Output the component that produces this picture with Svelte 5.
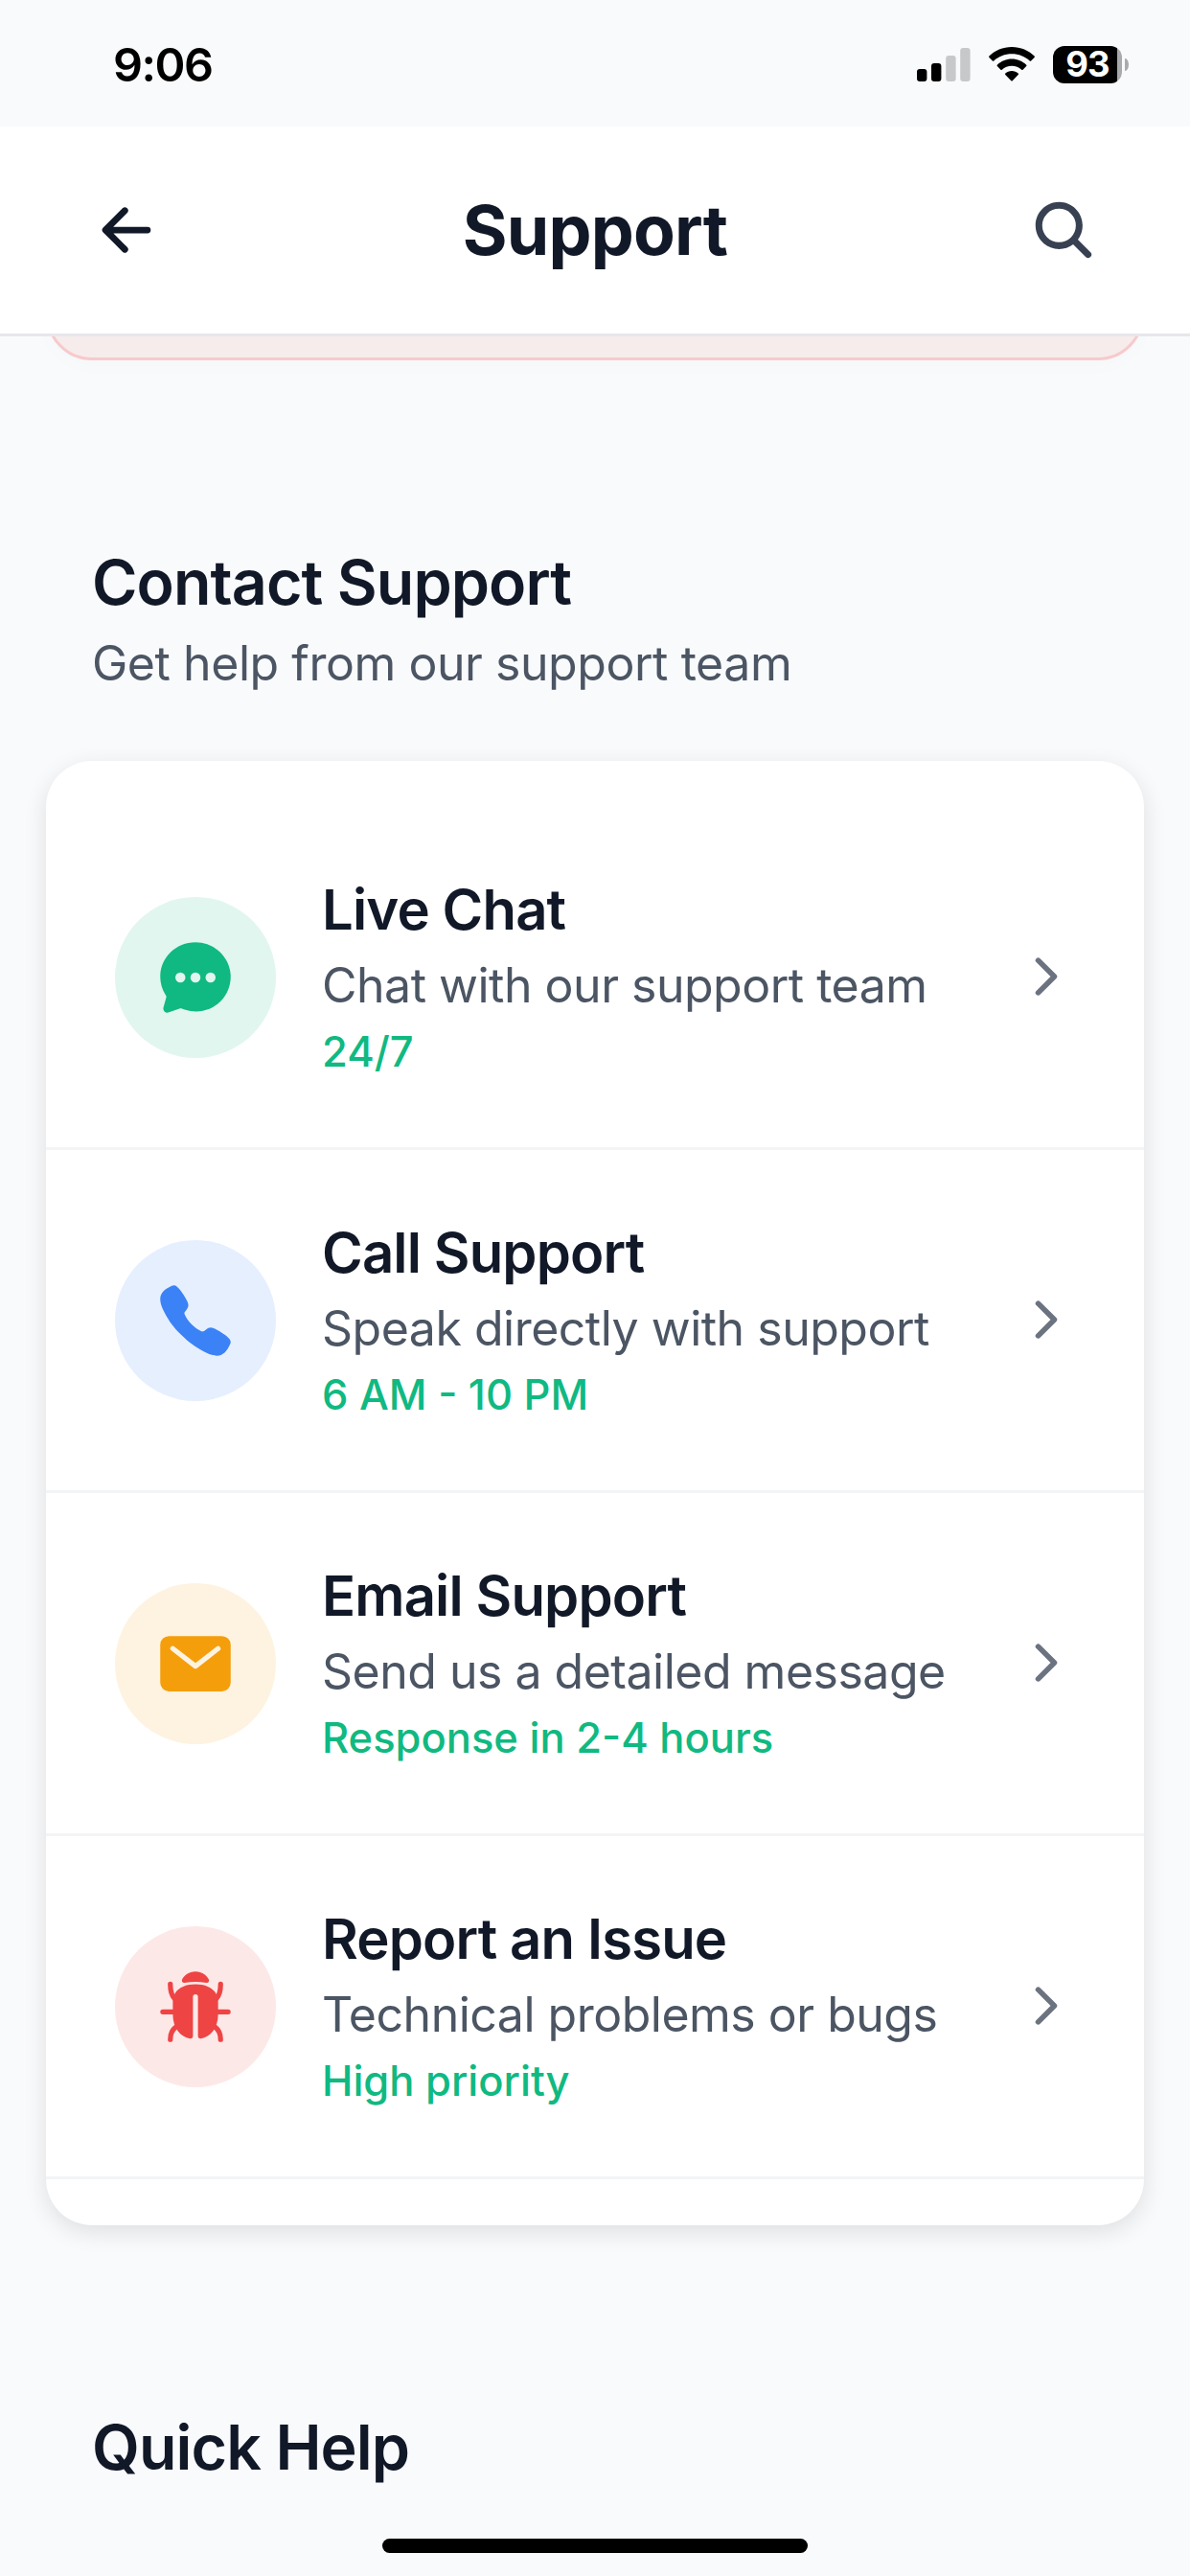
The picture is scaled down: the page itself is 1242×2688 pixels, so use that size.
<script>
  const contacts = [
    { kind: 'chat', title: 'Live Chat', text: 'Chat with our support team', note: '24/7' },
    { kind: 'call', title: 'Call Support', text: 'Speak directly with support', note: '6 AM - 10 PM' },
    { kind: 'mail', title: 'Email Support', text: 'Send us a detailed message', note: 'Response in 2-4 hours' },
    { kind: 'bug', title: 'Report an Issue', text: 'Technical problems or bugs', note: 'High priority' }
  ];
</script>

<div class="screen">
  <div class="status">
    <span class="time">9:06</span>
    <div class="indicators">
      <svg class="signal" viewBox="0 0 56 36">
        <rect x="0" y="22" width="10.4" height="13" rx="3" />
        <rect x="15" y="16" width="10.4" height="19" rx="3" />
        <rect class="dim" x="30.2" y="8" width="10.4" height="27" rx="3" />
        <rect class="dim" x="45.2" y="0" width="10.4" height="35" rx="3" />
      </svg>
      <svg class="wifi" viewBox="0 0 48 36">
        <path d="M24 0C33.300 0 41.700 3.600 47.600 9.500Q48.200 10.200 47.600 10.900L44.100 14.400Q43.400 15 42.700 14.400C37.900 9.900 31.300 7.200 24 7.200S10.100 9.900 5.300 14.400Q4.600 15 3.900 14.400L.4 10.900Q-.2 10.200 .4 9.500C6.300 3.600 14.700 0 24 0Z" />
        <path d="M24 12.500C29.900 12.500 35.300 14.900 39.200 18.700Q39.900 19.400 39.200 20.100L35.600 23.700Q34.900 24.300 34.200 23.700C31.500 21.300 27.900 19.800 24 19.800S16.500 21.300 13.800 23.700Q13.100 24.300 12.400 23.700L8.800 20.100Q8.100 19.400 8.800 18.700C12.700 14.900 18.100 12.500 24 12.500Z" />
        <path d="M24 25C26.600 25 28.900 26 30.700 27.600Q31.400 28.300 30.700 29L24.700 35.200Q24 35.900 23.300 35.200L17.300 29Q16.600 28.300 17.300 27.600C19.100 26 21.400 25 24 25Z" />
      </svg>
      <div class="battery">
        <span class="level">93</span>
        <span class="nub"></span>
      </div>
    </div>
  </div>

  <header>
    <svg class="back" viewBox="0 0 512 512"><path d="M244 400L100 256l144-144M120 256h292" /></svg>
    <h1>Support</h1>
    <svg class="search" viewBox="0 0 512 512"><path d="M456.690 421.390L362.600 327.300a173.810 173.810 0 0034.840-104.580C397.440 126.380 319.060 48 222.720 48S48 126.380 48 222.720s78.380 174.720 174.720 174.720A173.810 173.810 0 00327.300 362.600l94.090 94.090a25 25 0 0035.300-35.300zM97.920 222.720a124.800 124.800 0 11124.800 124.800 124.950 124.950 0 01-124.800-124.800z" /></svg>
  </header>

  <main>
    <div class="alert"></div>

    <section class="intro">
      <h2>Contact Support</h2>
      <p class="sub">Get help from our support team</p>
    </section>

    <div class="card">
      {#each contacts as c (c.kind)}
        <div class="row">
          <div class="badge {c.kind}">
            <svg viewBox="0 0 512 512">
              {#if c.kind === 'chat'}
                <path d="M398 81.840A227.400 227.400 0 00255.820 32C194.900 32 138 55.470 95.460 98.090 54.350 139.330 31.820 193.780 32 251.370a215.660 215.660 0 0035.650 118.760l.19.27c.28.41.57.82.86 1.220s.65.92.73 1.050l.22.4c1.130 2 2 4.440 1.230 6.900l-18.420 66.660a29.130 29.130 0 00-1.200 7.630A25.690 25.690 0 0076.830 480a29.440 29.440 0 0010.450-2.290l67.490-24.360.85-.33a14.750 14.750 0 015.840-1.150 15.120 15.120 0 015.370 1c1.620.63 16.330 6.260 31.850 10.600 12.900 3.600 39.740 9 60.770 9 59.650 0 115.350-23.100 156.830-65.060C457.360 365.770 480 310.420 480 251.490a213.500 213.500 0 00-4.780-45c-10.340-48.620-37.760-92.900-77.220-124.650zM160 288a32 32 0 1132-32 32 32 0 01-32 32zm96 0a32 32 0 1132-32 32 32 0 01-32 32zm96 0a32 32 0 1132-32 32 32 0 01-32 32z" />
              {:else if c.kind === 'call'}
                <path d="M391 480c-19.520 0-46.940-7.060-88-30-49.930-28-88.550-53.850-138.210-103.380C116.910 298.770 93.610 267.790 61 208.450c-36.840-67-30.560-102.120-23.540-117.130C45.820 73.380 58.160 62.650 74.110 52a176.300 176.300 0 0128.640-15.200c1-.43 1.930-.84 2.760-1.210 4.950-2.230 12.450-5.600 21.950-2 6.340 2.380 12 7.250 20.860 16 18.170 17.920 43 57.830 52.160 77.430 6.150 13.210 10.220 21.930 10.230 31.710 0 11.450-5.760 20.280-12.750 29.810-1.310 1.790-2.610 3.500-3.870 5.160-7.610 10-9.280 12.890-8.180 18.050 2.230 10.370 18.860 41.240 46.190 68.510s57.310 42.850 67.720 45.070c5.380 1.150 8.330-.59 18.650-8.470 1.480-1.130 3-2.300 4.590-3.470 10.660-7.930 19.080-13.540 30.260-13.540h.06c9.730 0 18.060 4.220 31.860 11.180 18 9.080 59.110 33.590 77.140 51.780 8.770 8.840 13.660 14.480 16.050 20.810 3.600 9.530.21 17-2 22-.37.83-.78 1.740-1.210 2.750a176.490 176.490 0 01-15.290 28.580c-10.630 15.900-21.400 28.210-39.380 36.580A67.420 67.420 0 01391 480z" />
              {:else if c.kind === 'mail'}
                <path d="M424 80H88a56.060 56.060 0 00-56 56v240a56.060 56.060 0 0056 56h336a56.060 56.060 0 0056-56V136a56.060 56.060 0 00-56-56zm-14.180 92.630l-144 112a16 16 0 01-19.640 0l-144-112a16 16 0 1119.640-25.260L256 251.730l134.180-104.360a16 16 0 0119.640 25.260z" />
              {:else}
                <path d="M256 32C296 32 329 56 341 83C346 96 337 106 325 104C280 96 232 96 187 104C175 106 166 96 171 83C183 56 216 32 256 32Z" />
                <path d="M256 112C314 112 364 132 386 170Q400 195 400 224V304C400 388 352 447 290 459Q272 461 272 444V192A16 16 0 00240 192V444Q240 461 222 459C160 447 112 388 112 304V224Q112 195 126 170C148 132 198 112 256 112Z" />
                <path class="legs" d="M48 288H120M392 288H464M96 112C96 160 104 184 124 206M416 112C416 160 408 184 388 206M96 464C96 424 106 404 130 386M416 464C416 424 406 404 382 386" />
              {/if}
            </svg>
          </div>
          <div class="copy">
            <h3>{c.title}</h3>
            <p class="text">{c.text}</p>
            <p class="note">{c.note}</p>
          </div>
          <svg class="chevron" viewBox="0 0 512 512"><path d="M184 112l144 144-144 144" /></svg>
        </div>
      {/each}
    </div>

    <h2 class="next">Quick Help</h2>
  </main>

  <div class="home"></div>
</div>

<style>
  :global(body) {
    background: #f9fafc;
  }
  .screen {
    position: relative;
    display: flex;
    flex-direction: column;
    width: 1242px;
    height: 2688px;
    overflow: hidden;
    background: #f9fafc;
    color: #111827;
    font-family: Inter, 'Liberation Sans', sans-serif;
  }
  h1, h2, h3, p {
    margin: 0;
    white-space: nowrap;
  }
  svg {
    display: block;
    flex: none;
  }
  .status {
    box-sizing: border-box;
    flex: none;
    display: flex;
    justify-content: space-between;
    height: 132px;
    padding: 48px 64px 0 118px;
    color: #000;
  }
  .time {
    font-size: 48.500px;
    line-height: 40px;
    font-weight: 600;
    letter-spacing: -1.500px;
  }
  .indicators {
    display: flex;
    align-items: flex-start;
  }
  .signal {
    width: 56px;
    height: 36px;
    margin: 2px 18.500px 0 0;
  }
  .dim {
    fill: #c7c8c9;
  }
  .wifi {
    width: 48px;
    height: 36px;
    margin: 1px 19.500px 0 0;
  }
  .battery {
    display: flex;
    align-items: center;
    gap: 3px;
    height: 39px;
  }
  .level {
    width: 72px;
    height: 39px;
    border-radius: 12px;
    background: linear-gradient(90deg, #000 67px, #a9aaab 67px);
    color: #fff;
    font-size: 36.500px;
    line-height: 39px;
    font-weight: 700;
    letter-spacing: -1px;
    text-align: center;
  }
  .nub {
    width: 4px;
    height: 13px;
    border-radius: 0 4px 4px 0 / 0 7px 7px 0;
    background: #a9aaab;
  }
  header {
    box-sizing: border-box;
    flex: none;
    display: flex;
    align-items: center;
    justify-content: space-between;
    height: 219px;
    padding: 0 96px;
    border-bottom: 3px solid #e5e7eb;
    background: #fff;
  }
  .back, .search {
    width: 72px;
    height: 72px;
  }
  .back path {
    fill: none;
    stroke: #111827;
    stroke-width: 48;
    stroke-linecap: round;
    stroke-linejoin: round;
  }
  .search {
    fill: #374151;
  }
  h1 {
    font-size: 71.500px;
    line-height: 84px;
    font-weight: 700;
    letter-spacing: -0.800px;
  }
  main {
    flex: 1;
    display: flow-root;
    overflow: hidden;
    padding: 0 48px;
  }
  .alert {
    box-sizing: border-box;
    height: 125px;
    margin-top: -100px;
    border: 3px solid #f7cacc;
    border-radius: 48px;
    background: #f7ecec;
    box-shadow: 0 6px 24px rgba(0, 0, 0, 0.015);
  }
  .intro {
    padding: 192px 48px 0;
  }
  h2 {
    font-size: 64.500px;
    line-height: 80px;
    font-weight: 600;
    letter-spacing: -0.900px;
  }
  .sub {
    margin-top: 8px;
    font-size: 50px;
    line-height: 72px;
    letter-spacing: -0.450px;
    color: #4b5563;
  }
  .card {
    margin-top: 66px;
    padding: 48px 0;
    border-radius: 48px;
    background: #fff;
    box-shadow: 0 7px 24px rgba(0, 0, 0, 0.11);
  }
  .row {
    display: flex;
    align-items: center;
    height: 355px;
    padding: 0 72px;
    border-bottom: 3px solid #f3f4f6;
  }
  .badge {
    display: flex;
    align-items: center;
    justify-content: center;
    flex: none;
    width: 168px;
    height: 168px;
    margin-top: 1px;
    border-radius: 50%;
  }
  .badge svg {
    width: 84px;
    height: 84px;
    fill: currentColor;
  }
  .chat { background: #e1f6ef; color: #10b981; }
  .call { background: #e6effe; color: #3b82f6; }
  .mail { background: #fef3e1; color: #f59e0b; }
  .bug { background: #fde8e8; color: #ef4444; }
  .legs {
    fill: none;
    stroke: currentColor;
    stroke-width: 32;
    stroke-linecap: round;
  }
  .copy {
    flex: 1;
    margin-left: 48px;
    padding-bottom: 3px;
  }
  h3 {
    font-size: 58px;
    line-height: 78px;
    font-weight: 600;
    letter-spacing: -0.850px;
  }
  .text {
    font-size: 50px;
    line-height: 80px;
    letter-spacing: -0.500px;
    color: #4b5563;
  }
  .note {
    font-size: 43.500px;
    line-height: 58px;
    font-weight: 500;
    color: #10b981;
  }
  .chevron {
    width: 60px;
    height: 60px;
    margin-bottom: 1px;
  }
  .chevron path {
    fill: none;
    stroke: #6b7280;
    stroke-width: 48;
    stroke-linecap: round;
    stroke-linejoin: round;
  }
  .next {
    margin: 192px 48px 0;
  }
  .home {
    position: absolute;
    left: 399px;
    bottom: 24px;
    width: 444px;
    height: 15px;
    border-radius: 8px;
    background: #000;
  }
</style>
